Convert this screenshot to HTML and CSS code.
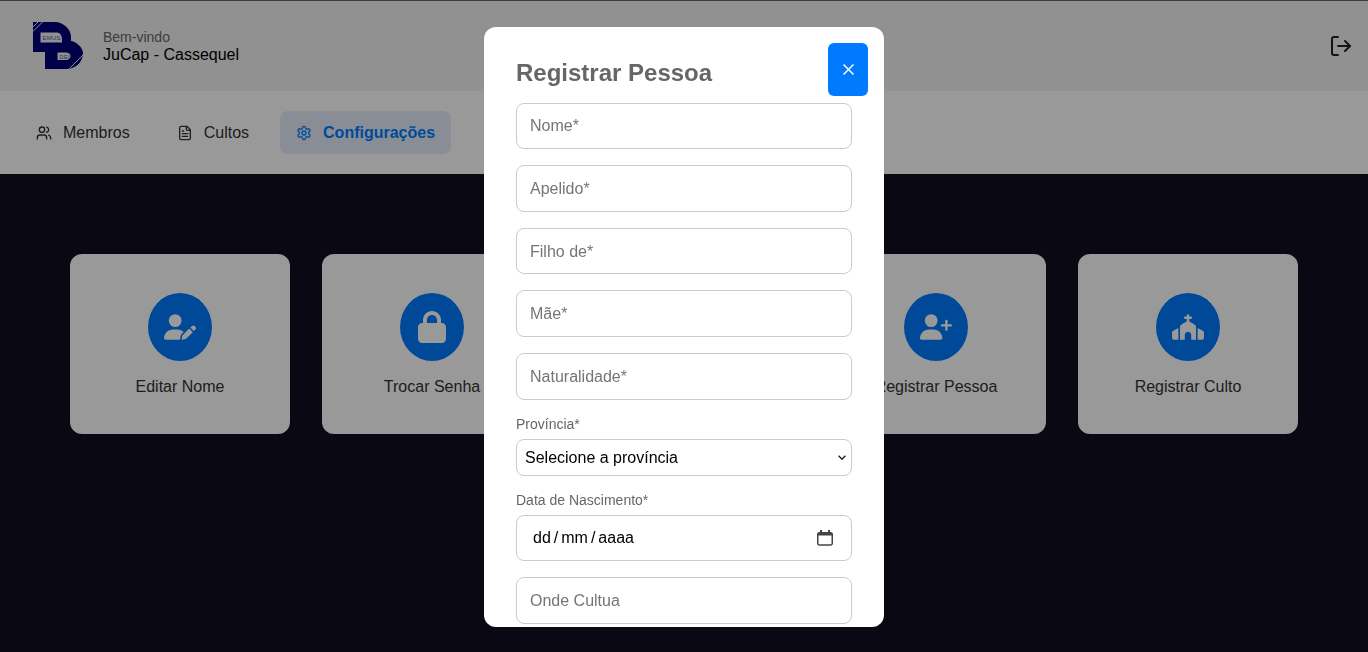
FILE: index.html
```html
<!DOCTYPE html>
<html lang="pt">
<head>
    <meta charset="UTF-8">
    <meta name="viewport" content="width=device-width, initial-scale=1.0">
    <title>JuCap - Configurações</title>
    <link rel="stylesheet" href="styles.css">
</head>
<body>
    <header class="topbar">
        <div class="brand">
            <svg class="logo" viewBox="0 0 50 48" aria-hidden="true">
                <path class="logo-ink" fill-rule="evenodd" d="M0 0H22C30 0 38 7 38 15V19C44 20 50 26 50 31C50 40 43 47 33 47H12V30H0ZM7.500 10.500V20.500H29V17C29 13.500 27 10.500 24 10.500ZM24.500 30.500V38H33C36 38 37.500 36 37.500 34C37.500 32.500 36 30.500 33 30.500Z"/>
                <path class="logo-cut" d="M0 5L5 0M0 9.500L9.500 0M50 33L36.500 46.500M48.500 40L42 46.500"/>
                <text class="logo-text" x="9.500" y="17.500" textLength="18">EMUS</text>
                <text class="logo-text logo-text-small" x="26.500" y="36.500" textLength="10">DEI</text>
            </svg>
            <div class="brand-text">
                <span class="welcome">Bem-vindo</span>
                <span class="church-name">JuCap - Cassequel</span>
            </div>
        </div>
        <svg class="logout" viewBox="0 0 24 24" aria-hidden="true">
            <path d="M9 21H5a2 2 0 0 1-2-2V5a2 2 0 0 1 2-2h4"/>
            <path d="M16 17l5-5-5-5"/>
            <path d="M21 12H9"/>
        </svg>
    </header>

    <nav class="tabs">
        <a class="tab">
            <svg class="tab-icon" viewBox="0 0 24 24" aria-hidden="true">
                <path d="M16 21v-2a4 4 0 0 0-4-4H6a4 4 0 0 0-4 4v2"/>
                <circle cx="9" cy="7" r="4"/>
                <path d="M22 21v-2a4 4 0 0 0-3-3.87"/>
                <path d="M16 3.130a4 4 0 0 1 0 7.750"/>
            </svg>
            Membros
        </a>
        <a class="tab">
            <svg class="tab-icon" viewBox="0 0 24 24" aria-hidden="true">
                <path d="M15 2H6a2 2 0 0 0-2 2v16a2 2 0 0 0 2 2h12a2 2 0 0 0 2-2V7Z"/>
                <path d="M14 2v4a2 2 0 0 0 2 2h4"/>
                <path d="M10 9H8"/>
                <path d="M16 13H8"/>
                <path d="M16 17H8"/>
            </svg>
            Cultos
        </a>
        <a class="tab tab-active">
            <svg class="tab-icon" viewBox="0 0 24 24" aria-hidden="true">
                <path d="M12.220 2h-.44a2 2 0 0 0-2 2v.18a2 2 0 0 1-1 1.730l-.43.25a2 2 0 0 1-2 0l-.15-.08a2 2 0 0 0-2.730.73l-.22.38a2 2 0 0 0 .73 2.730l.15.1a2 2 0 0 1 1 1.720v.51a2 2 0 0 1-1 1.740l-.15.09a2 2 0 0 0-.73 2.730l.22.38a2 2 0 0 0 2.730.73l.15-.08a2 2 0 0 1 2 0l.43.25a2 2 0 0 1 1 1.730V20a2 2 0 0 0 2 2h.44a2 2 0 0 0 2-2v-.18a2 2 0 0 1 1-1.730l.43-.25a2 2 0 0 1 2 0l.15.08a2 2 0 0 0 2.730-.73l.22-.39a2 2 0 0 0-.73-2.730l-.15-.08a2 2 0 0 1-1-1.740v-.5a2 2 0 0 1 1-1.740l.15-.09a2 2 0 0 0 .73-2.730l-.22-.38a2 2 0 0 0-2.730-.73l-.15.08a2 2 0 0 1-2 0l-.43-.25a2 2 0 0 1-1-1.730V4a2 2 0 0 0-2-2z"/>
                <circle cx="12" cy="12" r="3"/>
            </svg>
            Configurações
        </a>
    </nav>

    <main class="cards">
        <div class="card">
            <div class="card-circle">
                <svg class="card-icon" viewBox="0 0 640 512" aria-hidden="true"><path d="M224 256A128 128 0 1 0 224 0a128 128 0 1 0 0 256zm-45.7 48C79.8 304 0 383.8 0 482.3C0 498.7 13.3 512 29.7 512H322.8c-3.1-8.8-3.7-18.4-1.4-27.8l15-60.1c2.8-11.3 8.6-21.5 16.8-29.7l40.3-40.3c-32.1-31-75.7-50.1-123.9-50.1H178.3zm435.5-68.3c-15.6-15.6-40.9-15.6-56.6 0l-29.4 29.4 71 71 29.4-29.4c15.6-15.6 15.6-40.9 0-56.6l-14.4-14.4zM375.9 417c-4.1 4.1-7 9.2-8.4 14.9l-15 60.1c-1.4 5.5 .2 11.2 4.2 15.2s9.7 5.6 15.2 4.2l60.1-15c5.6-1.4 10.8-4.3 14.9-8.4L576.1 358.7l-71-71L375.9 417z"/></svg>
            </div>
            <span>Editar Nome</span>
        </div>
        <div class="card">
            <div class="card-circle">
                <svg class="card-icon" viewBox="0 0 448 512" aria-hidden="true"><path d="M144 144v48H304V144c0-44.2-35.8-80-80-80s-80 35.8-80 80zM80 192V144C80 64.5 144.5 0 224 0s144 64.5 144 144v48h16c35.3 0 64 28.7 64 64V448c0 35.3-28.7 64-64 64H64c-35.3 0-64-28.7-64-64V256c0-35.3 28.7-64 64-64H80z"/></svg>
            </div>
            <span>Trocar Senha</span>
        </div>
        <div class="card">
            <div class="card-circle"></div>
            <span>Registrar Membro</span>
        </div>
        <div class="card">
            <div class="card-circle">
                <svg class="card-icon" viewBox="0 0 640 512" aria-hidden="true"><path d="M96 128a128 128 0 1 1 256 0A128 128 0 1 1 96 128zM0 482.3C0 383.8 79.8 304 178.3 304h91.4C368.2 304 448 383.8 448 482.3c0 16.4-13.3 29.7-29.7 29.7H29.7C13.3 512 0 498.7 0 482.3zM504 312V248H440c-13.3 0-24-10.7-24-24s10.7-24 24-24h64V136c0-13.3 10.7-24 24-24s24 10.7 24 24v64h64c13.3 0 24 10.7 24 24s-10.7 24-24 24H552v64c0 13.3-10.7 24-24 24s-24-10.7-24-24z"/></svg>
            </div>
            <span>Registrar Pessoa</span>
        </div>
        <div class="card">
            <div class="card-circle">
                <svg class="card-icon" viewBox="0 0 640 512" aria-hidden="true"><path d="M344 24c0-13.3-10.7-24-24-24s-24 10.7-24 24V48H264c-13.3 0-24 10.7-24 24s10.7 24 24 24h32v46.4L183.3 210c-14.5 8.7-23.3 24.3-23.3 41.2V512h96V416c0-35.3 28.7-64 64-64s64 28.7 64 64v96h96V251.2c0-16.9-8.8-32.5-23.3-41.2L344 142.4V96h32c13.3 0 24-10.7 24-24s-10.7-24-24-24H344V24zM24.9 330.3C9.5 338.8 0 354.9 0 372.4V464c0 26.5 21.5 48 48 48h80V273.6L24.9 330.3zM592 512c26.5 0 48-21.5 48-48V372.4c0-17.5-9.5-33.6-24.9-42.1L512 273.6V512h80z"/></svg>
            </div>
            <span>Registrar Culto</span>
        </div>
    </main>

    <div class="overlay">
        <div class="modal">
            <button class="close-button" type="button" aria-label="Fechar">
                <svg class="close-icon" viewBox="0 0 11 11" aria-hidden="true"><path d="M.5.5l10 10M10.500.5l-10 10"/></svg>
            </button>
            <h2 class="modal-title">Registrar Pessoa</h2>
            <form class="person-form">
                <input class="field" type="text" placeholder="Nome*">
                <input class="field" type="text" placeholder="Apelido*">
                <input class="field" type="text" placeholder="Filho de*">
                <input class="field" type="text" placeholder="Mãe*">
                <input class="field" type="text" placeholder="Naturalidade*">
                <label class="field-label" for="provincia">Província*</label>
                <select class="field-select" id="provincia">
                    <option>Selecione a província</option>
                </select>
                <label class="field-label">Data de Nascimento*</label>
                <div class="field date-field">
                    <span class="date-text"><span>dd</span><i>/</i><span>mm</span><i>/</i><span>aaaa</span></span>
                    <svg class="date-icon" viewBox="0 0 16 16" aria-hidden="true">
                        <path class="date-icon-line" d="M2.500 2.750h11A1.750 1.750 0 0 1 15.250 4.500v8.750a1.750 1.750 0 0 1-1.750 1.750h-11A1.750 1.750 0 0 1 .75 13.250V4.500A1.750 1.750 0 0 1 2.500 2.750z"/>
                        <path class="date-icon-fill" d="M1 3h14v2.500H1zM3 0h2v3H3zM11 0h2v3h-2z"/>
                    </svg>
                </div>
                <input class="field" type="text" placeholder="Onde Cultua">
            </form>
        </div>
    </div>
</body>
</html>
```

FILE: styles.css
```css
* {
    box-sizing: border-box;
}

body {
    font-family: 'Liberation Sans', Arial, sans-serif;
    margin: 0;
    min-height: 652px;
    background-color: #120f21;
    color: #333;
    font-size: 16px;
}

/* topo */
.topbar {
    display: flex;
    align-items: center;
    justify-content: space-between;
    height: 91px;
    padding: 0 15px 0 33px;
    background-color: #f2f2f2;
    border-top: 1px solid #606070;
}

.brand {
    display: flex;
    align-items: center;
    gap: 20px;
}

.logo {
    width: 50px;
    height: 48px;
}

.logo-ink {
    fill: #00007a;
}

.logo-cut {
    fill: none;
    stroke: #f2f2f2;
    stroke-width: 1;
}

.logo-text {
    font-size: 6px;
    fill: #2a2a8a;
    opacity: 0.8;
}

.logo-text-small {
    font-size: 5.500px;
}

.brand-text {
    display: flex;
    flex-direction: column;
    gap: 1px;
}

.welcome {
    font-size: 14px;
    color: #666;
}

.church-name {
    color: #000;
}

.logout {
    width: 24px;
    height: 24px;
    fill: none;
    stroke: #222;
    stroke-width: 2;
    stroke-linecap: round;
    stroke-linejoin: round;
}

/* abas */
.tabs {
    display: flex;
    gap: 15px;
    padding: 20px;
    background-color: #fff;
}

.tab {
    display: flex;
    align-items: center;
    gap: 11px;
    height: 43px;
    padding: 0 16px;
    border-radius: 8px;
    color: #333;
}

.tab-icon {
    width: 16px;
    height: 16px;
    fill: none;
    stroke: currentColor;
    stroke-width: 2;
    stroke-linecap: round;
    stroke-linejoin: round;
}

.tab-active {
    background-color: #e5edfb;
    color: #007bff;
    font-weight: bold;
}

/* cartoes */
.cards {
    display: flex;
    justify-content: center;
    gap: 32px;
    padding-top: 80px;
}

.card {
    display: flex;
    flex-direction: column;
    align-items: center;
    justify-content: center;
    gap: 17px;
    width: 220px;
    height: 180px;
    padding-top: 1px;
    background-color: #fff;
    border-radius: 12px;
    color: #333;
}

.card-circle {
    display: flex;
    align-items: center;
    justify-content: center;
    width: 64px;
    height: 68px;
    border-radius: 50%;
    background-color: #007bff;
}

.card-icon {
    width: 32px;
    height: 32px;
    fill: #fff;
}

/* modal */
.overlay {
    position: fixed;
    inset: 0;
    display: flex;
    justify-content: center;
    align-items: flex-start;
    padding-top: 27px;
    background-color: rgba(0, 0, 0, 0.4);
}

.modal {
    position: relative;
    width: 400px;
    height: 600px;
    padding: 32px;
    overflow: hidden;
    background-color: #fff;
    border-radius: 12px;
}

.close-button {
    position: absolute;
    top: 16px;
    right: 16px;
    display: flex;
    align-items: center;
    justify-content: center;
    width: 40px;
    height: 53px;
    padding: 0;
    border: none;
    border-radius: 6px;
    background-color: #007bff;
}

.close-icon {
    width: 11px;
    height: 11px;
    fill: none;
    stroke: #fff;
    stroke-width: 1.500;
}

.modal-title {
    margin: 0 0 15.600px;
    font-size: 24px;
    color: #666;
}

.person-form {
    display: flex;
    flex-direction: column;
}

.field {
    width: 100%;
    height: 46.600px;
    flex-shrink: 0;
    margin-bottom: 16px;
    padding: 1px 13px 0;
    border: 1px solid #ccc;
    border-radius: 8px;
    background-color: #fff;
    font-family: inherit;
    font-size: 16px;
}

.field-label {
    margin-bottom: 7px;
    font-size: 14px;
    color: #666;
}

.field-select {
    appearance: none;
    width: 100%;
    height: 37px;
    flex-shrink: 0;
    margin-bottom: 16px;
    padding: 0 8px;
    border: 1px solid #ccc;
    border-radius: 8px;
    background-color: #fff;
    background-image: url("data:image/svg+xml,%3Csvg xmlns='http://www.w3.org/2000/svg' width='8' height='5' viewBox='0 0 8 5'%3E%3Cpath d='M.6.8 4 4.200 7.400.8' fill='none' stroke='%23222' stroke-width='1.400'/%3E%3C/svg%3E");
    background-repeat: no-repeat;
    background-position: right 5px center;
    font-family: inherit;
    font-size: 16px;
    color: #000;
}

.date-field {
    display: flex;
    align-items: center;
    justify-content: space-between;
    padding: 0 18px 0 16px;
    color: #000;
}

.date-text {
    display: flex;
}

.date-text i {
    font-style: normal;
    margin: 0 3px;
}

.date-icon {
    width: 16px;
    height: 16px;
}

.date-icon-line {
    fill: none;
    stroke: #444;
    stroke-width: 1.500;
}

.date-icon-fill {
    fill: #444;
}
```
